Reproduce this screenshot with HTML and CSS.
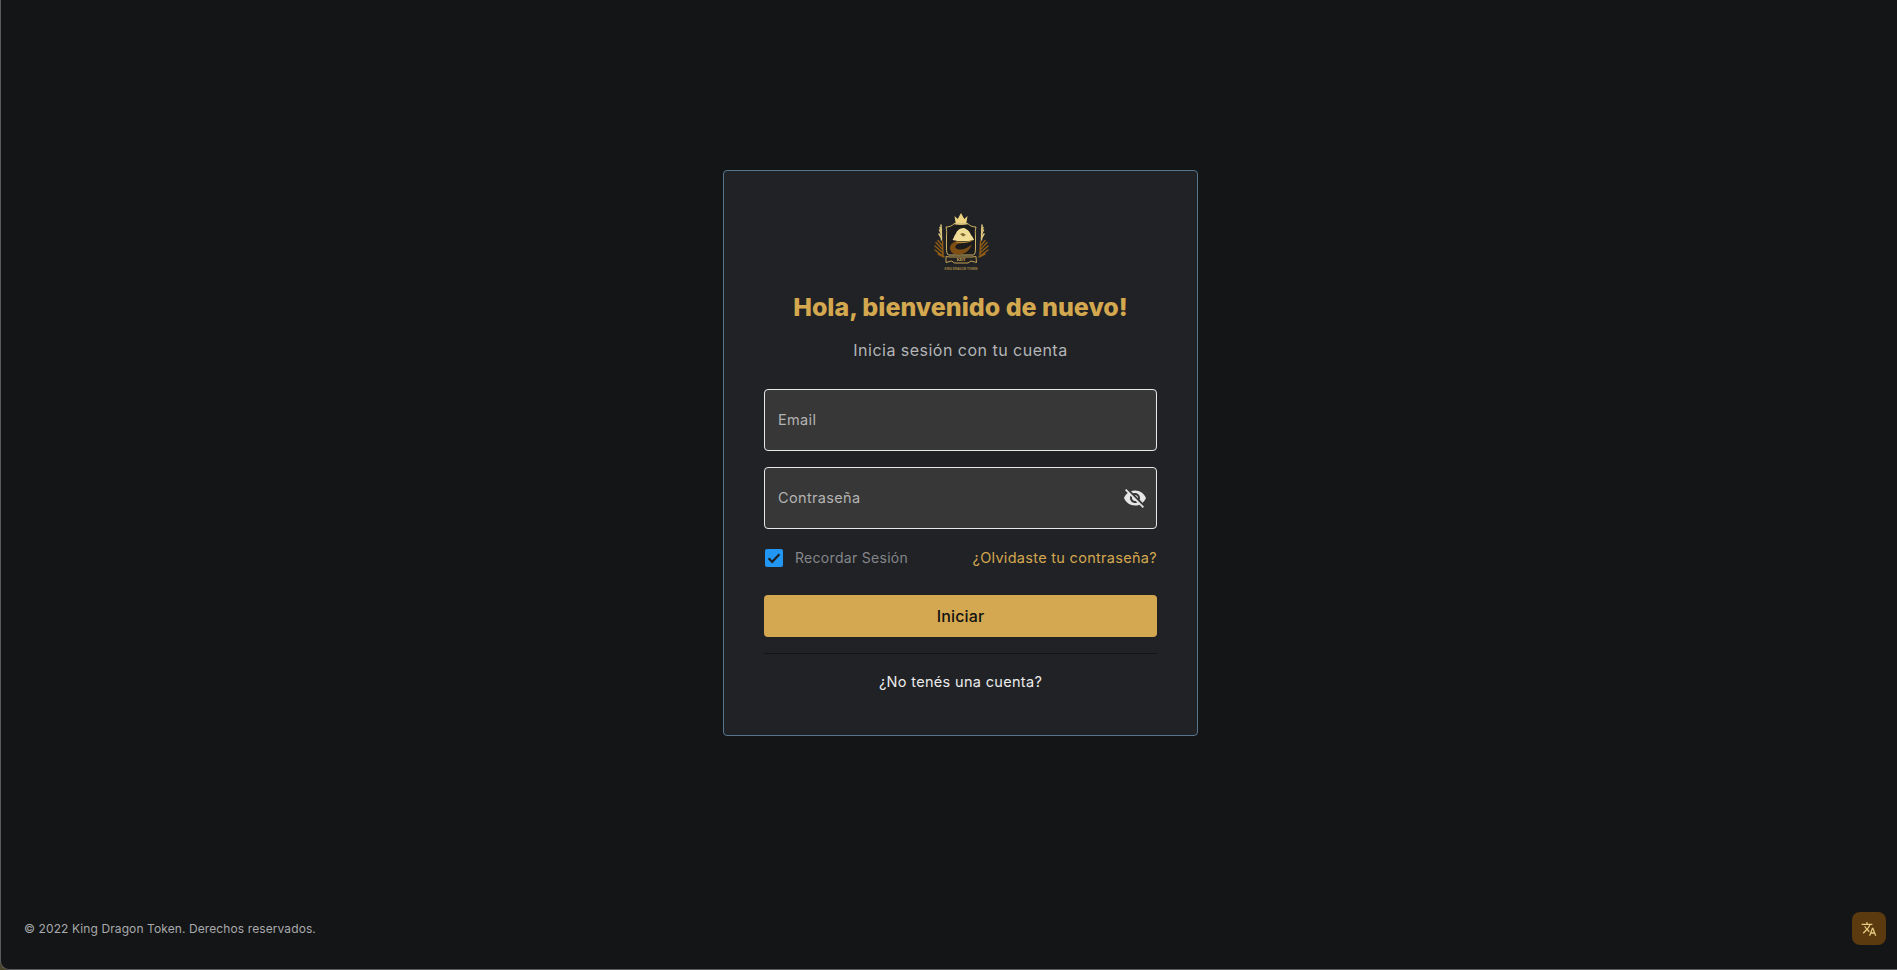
FILE: index.html
```html
<!DOCTYPE html>
<html lang="es">
<head>
<meta charset="utf-8">
<title>King Dragon Token</title>
<link rel="stylesheet" href="styles.css">
</head>
<body>
<div class="page">
  <main class="main">
    <section class="card">
      <svg class="logo" viewBox="0 0 70 66" width="70" height="66" aria-hidden="true">
        <defs>
          <g id="stalk" fill="none" stroke-linecap="round">
            <g stroke="#dcc67c" stroke-width="1.500">
              <path d="M15.500 32L15 17"/>
              <path d="M15.500 30l-2.500-4M15.500 26l-2-4M15.500 22l-1.500-2.500"/>
            </g>
            <g stroke="#8e5c16" stroke-width="1.400">
              <path d="M16.500 33L17 48"/>
              <path d="M17 48l-8-6M17 45l-8-7M16.500 41.500l-6.500-7M16.500 38l-4.500-5.500M18 49l-6-3"/>
            </g>
          </g>
        </defs>
        <path d="M28.500 8l3.200 3 3.300-6 3.300 6 3.200-3-1.200 7.500H29.700z" fill="#ecd27e"/>
        <path d="M28 15.800h14" stroke="#f4e0a0" stroke-width="1"/>
        <path d="M20 19c3 0 6-1 8-3.200 4 1 10 1 14 0 2 2.200 5 3.200 8 3.200-.8 3-.8 6-.5 9v12c0 4-.5 6-2 7H22.500c-1.500-1-2-3-2-7V28c.3-3 .3-6-.5-9z" fill="#1d1c1d" stroke="#e3c56e" stroke-width=".9"/>
        <use href="#stalk"/>
        <use href="#stalk" transform="translate(71 0) scale(-1 1)"/>
        <path d="M26.500 32c1-1 1.500-4.500 3.500-6.500.5-2.500 4-5.500 7.500-5.500 3.500.5 6.500 4 7.500 7 1.500 1.500 2.500 3.500 3 5-6.500 1.800-15 1.800-21.500 0z" fill="#f0dd96"/>
        <path d="M34 26l3-1 3 2-3 1.500z" fill="#7a6830"/>
        <path d="M35 33.500c-6-1-11 2-11 6.500 0 5 5 7.500 10.500 6.500 5-1 9-4 11.500-10-4 3-8 5-12 5-3 0-5.500-1.500-4.500-3.500 1-2 3-2.500 6-2.500z" fill="#7d4f14"/>
        <path d="M30 34c5 1 11 1 16-1.500" fill="none" stroke="#b98a34" stroke-width="1"/>
        <path d="M20 48.500l4 .5h22l4-.5.500 6-5.500-1.500-3 2H28.500l-3-2-5.500 1.500z" fill="#232122" stroke="#d3ae58" stroke-width=".9"/>
        <text class="logo-band" x="35" y="53" text-anchor="middle">KDT</text>
        <text class="logo-name" x="35" y="61.500" text-anchor="middle">KING DRAGON TOKEN</text>
      </svg>
      <h1 class="title">Hola, bienvenido de nuevo!</h1>
      <p class="subtitle">Inicia sesión con tu cuenta</p>
      <form class="form">
        <div class="field"><span class="placeholder">Email</span></div>
        <div class="field">
          <span class="placeholder">Contraseña</span>
          <svg class="eye" viewBox="0 0 24 24" width="24" height="24" aria-hidden="true"><path d="M12 7c2.76 0 5 2.24 5 5 0 .65-.13 1.26-.36 1.83l2.92 2.92c1.51-1.26 2.7-2.89 3.43-4.75-1.73-4.39-6-7.5-11-7.5-1.4 0-2.74.25-3.98.7l2.16 2.16C10.74 7.13 11.35 7 12 7zM2 4.270l2.280 2.280.460.460C3.080 8.300 1.780 10.020 1 12c1.730 4.390 6 7.500 11 7.500 1.550 0 3.030-.300 4.380-.840l.420.420L19.730 22 21 20.730 3.270 3 2 4.270zM7.530 9.800l1.550 1.550c-.050.210-.080.430-.080.650 0 1.660 1.340 3 3 3 .220 0 .440-.030.650-.080l1.550 1.550c-.670.330-1.410.530-2.200.530-2.760 0-5-2.240-5-5 0-.790.200-1.530.530-2.200zm4.310-.780l3.150 3.150.020-.160c0-1.660-1.340-3-3-3l-.170.010z"/></svg>
        </div>
        <div class="options">
          <label class="remember">
            <span class="check"><svg viewBox="0 0 18 18" width="18" height="18" aria-hidden="true"><path d="M3.600 9.200l3.600 3.600 7.200-7.600" fill="none" stroke="#1d2024" stroke-width="2.200"/></svg></span>
            <span class="remember-text">Recordar Sesión</span>
          </label>
          <a class="forgot" href="#">¿Olvidaste tu contraseña?</a>
        </div>
        <button class="submit" type="button">Iniciar</button>
        <hr class="divider">
        <a class="register" href="#">¿No tenés una cuenta?</a>
      </form>
    </section>
  </main>
  <footer class="footer">
    <span class="copy">© 2022 King Dragon Token. Derechos reservados.</span>
    <button class="lang" type="button" aria-label="Idioma">
      <svg viewBox="0 0 24 24" width="16" height="16" aria-hidden="true"><path d="M12.870 15.070l-2.540-2.510.030-.030c1.740-1.940 2.980-4.170 3.710-6.530H17V4h-7V2H8v2H1v1.990h11.170C11.500 7.920 10.440 9.750 9 11.350 8.070 10.320 7.300 9.190 6.690 8h-2c.730 1.630 1.730 3.170 2.980 4.560l-5.090 5.020L4 19l5-5 3.110 3.110.760-2.040zM18.500 10h-2L12 22h2l1.120-3h4.750L21 22h2l-4.500-12zm-2.620 7l1.620-4.330L19.120 17h-3.240z"/></svg>
    </button>
  </footer>
</div>
</body>
</html>
```

FILE: styles.css
```css
* { box-sizing: border-box; }
html, body { height: 100%; margin: 0; }
body {
  background: #4a4628;
  font-family: "Inter", "Liberation Sans", sans-serif;
  color: #e6e6e6;
}
.page {
  height: 100%;
  display: flex;
  flex-direction: column;
  background: #141517;
  border-left: 1px solid #5a5b5d;
  border-bottom: 1px solid #5a5b5d;
  border-bottom-left-radius: 9px;
}
.main {
  flex: 1;
  padding-left: 23px;
  display: flex;
  justify-content: center;
  align-items: center;
}
.card {
  width: 475px;
  height: 566px;
  padding: 37px 40px 0;
  display: flex;
  flex-direction: column;
  align-items: center;
  background: #202226;
  border: 1px solid #56768f;
  border-radius: 4px;
}
.logo { display: block; flex: none; }
.logo-band { font: 700 4px "Liberation Serif", serif; fill: #d3ae58; }
.logo-name { font: 700 3px "Liberation Sans", sans-serif; fill: #a98b45; }
.title {
  margin: 16px 0 -1px;
  font-size: 25px;
  line-height: 34px;
  font-weight: 800;
  letter-spacing: 0;
  color: #d4a84f;
}
.subtitle {
  margin: 15px 0 0;
  font-size: 16px;
  line-height: 24px;
  letter-spacing: .48px;
  color: #b4b5b7;
}
.form { width: 100%; margin-top: 27px; display: flex; flex-direction: column; }
.field {
  height: 62px;
  padding: 0 9px 0 13px;
  display: flex;
  align-items: center;
  justify-content: space-between;
  background: #373737;
  border: 1px solid #e8e8e8;
  border-radius: 4px;
}
.field + .field { margin-top: 16px; }
.placeholder { font-size: 14.5px; letter-spacing: .35px; line-height: 20px; margin-top: -1px; color: #b3b3b3; }
.eye { fill: #e6e6e6; display: block; }
.options {
  height: 18px;
  margin-top: 20px;
  padding-left: 1px;
  display: flex;
  align-items: center;
  justify-content: space-between;
  font-size: 14px;
}
.remember { display: flex; align-items: center; gap: 12px; color: #85868a; letter-spacing: .3px; }
.remember-text { margin-bottom: 2px; }
.check { width: 18px; height: 18px; display: block; background: #2196f3; border-radius: 2px; }
.check svg { display: block; }
.forgot { margin-bottom: 2px; color: #d4a84f; text-decoration: none; font-size: 14.5px; letter-spacing: .3px; }
.submit {
  height: 42px;
  margin-top: 28px;
  padding: 0;
  font: 500 16px "Inter", "Liberation Sans", sans-serif;
  letter-spacing: .15px;
  color: #111;
  background: #d4a851;
  border: 0;
  border-radius: 4px;
}
.divider { width: 100%; height: 1px; margin: 16px 0 0; background: #131417; border: 0; }
.register {
  margin-top: 18px;
  text-align: center;
  font-size: 14.5px;
  line-height: 20px;
  font-weight: 400;
  letter-spacing: .32px;
  color: #ececec;
  text-decoration: none;
}
.footer {
  height: 63px;
  padding: 6px 11px 24px 23px;
  display: flex;
  align-items: center;
  justify-content: space-between;
}
.copy { font-size: 12px; letter-spacing: .1px; color: #a9aaac; }
.lang {
  width: 34px;
  height: 33px;
  padding: 0;
  display: flex;
  align-items: center;
  justify-content: center;
  background: #5c3a10;
  border: 0;
  border-radius: 8px;
}
.lang svg { fill: #e9cc82; }
```
